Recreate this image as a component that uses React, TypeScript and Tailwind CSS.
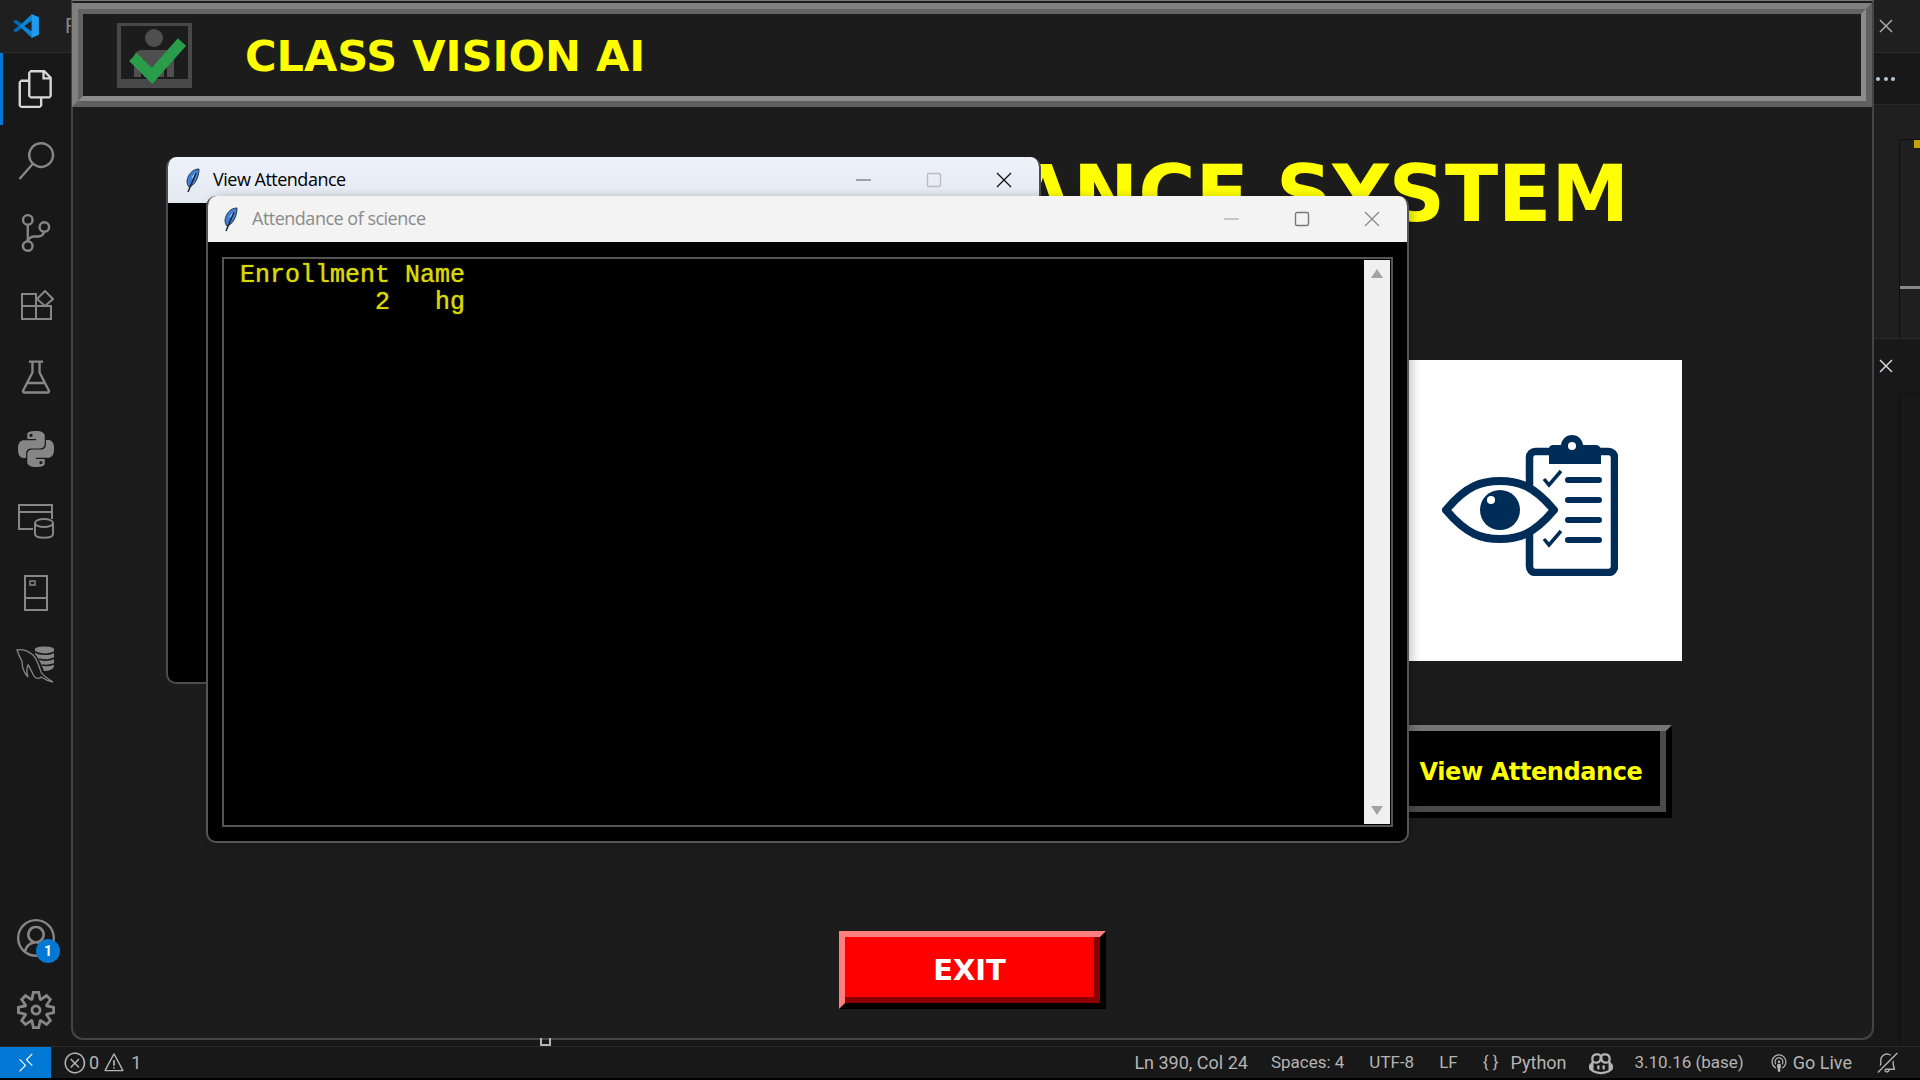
import React from "react";
import {
  VscFiles, VscSearch, VscSourceControl, VscBeaker, VscAccount,
  VscSettingsGear, VscRemote, VscError, VscWarning, VscBroadcast, VscBellSlash, VscCopilot, VscClose,
} from "react-icons/vsc";
import { SiPython } from "react-icons/si";

const VsLogo = () => (
  <svg width="26" height="24" viewBox="0 0 100 100" preserveAspectRatio="none" className="shrink-0">
    <path d="M72 1 L33 41 L12 25 L1 31 L22 50 L1 69 L12 75 L33 59 L72 99 L99 86 V14 Z M72 28 V72 L43 50 Z" fill="#0a84d6" fillRule="evenodd" />
    <path d="M72 1 L99 14 V86 L72 99 V72 V28 Z" fill="#1f9cf0" />
    <path d="M1 69 L12 75 L33 59 L22 50 Z" fill="#0067ab" />
    <path d="M1 31 L12 25 L33 41 L22 50 Z" fill="#0067ab" />
  </svg>
);

const Feather = () => (
  <svg width="16" height="25" viewBox="0 0 16 25">
    <path d="M14 1 C8 1 3 6 2 13 C2 16 3 18 4 19 C9 18 14 10 14 1 Z" fill="#3f7fd6" stroke="#28344a" strokeWidth="1" />
    <path d="M7 10 L11 5" stroke="#a9cdf5" strokeWidth="1.5" />
    <path d="M11 5 L3 24" stroke="#1b2433" strokeWidth="1.5" />
  </svg>
);

const ExtIcon = () => (
  <svg width="33" height="30" viewBox="0 0 33 30" fill="none" stroke="#868686" strokeWidth="2" className="ml-[3px]">
    <path d="M1 4 H15 V29 H1 Z" />
    <path d="M1 16 H30 V29 H15" />
    <path d="M24 1 L32 9 L24 16 L16 9 Z" />
  </svg>
);

const DbIcon = () => (
  <svg width="38" height="36" viewBox="0 0 38 36" fill="none" stroke="#868686" strokeWidth="2">
    <path d="M35 16 V2 H2 V26 H16" />
    <path d="M2 9 H35" />
    <ellipse cx="27" cy="20" rx="9" ry="4" />
    <path d="M18 20 V31 C18 36 36 36 36 31 V20" />
  </svg>
);

const NotebookIcon = () => (
  <svg width="26" height="38" viewBox="0 0 26 38" fill="none" stroke="#868686" strokeWidth="2">
    <rect x="2" y="2" width="22" height="34" />
    <path d="M2 24 H24" />
    <rect x="7" y="7" width="5" height="4" strokeWidth="1.5" />
  </svg>
);

const MysqlIcon = () => (
  <svg width="40" height="38" viewBox="0 0 40 38" fill="none" stroke="#868686">
    <path d="M1 4 C6 3 12 5 17 9 C21 13 23 20 25 26 C27 30 32 33 37 36 C32 35 28 33 25 31 C23 33 20 33 18 30 C16 27 15 23 12 19 C10 23 11 28 12 31 C8 27 6 21 6 15 C4 12 3 9 1 4 Z" strokeWidth="1.3" />
    <path d="M19 3 C19 -0.5 38 -0.5 38 3 V20 C38 24 31 25 28 25 C26 20 24 14 19 8 Z" fill="#868686" stroke="none" />
    <path d="M19 6 C24 9 34 9 38 6 M23 13 C28 15 35 14 38 12 M26 19 C30 20 35 19 38 18" stroke="#181818" strokeWidth="1.6" />
  </svg>
);

const Activity = ({ children, active }: { children: React.ReactNode; active?: boolean }) => (
  <div className={`h-[72px] w-full flex items-center justify-center border-l-[3px] ${active ? "border-[#0078d4] text-[#d7d7d7]" : "border-transparent text-[#868686]"}`}>
    <div className="-ml-[3px] flex items-center justify-center">{children}</div>
  </div>
);

const Logo = () => (
  <svg width="75" height="65" viewBox="0 0 75 65" className="shrink-0">
    <rect x="0" y="0" width="75" height="65" fill="#484848" />
    <rect x="4" y="3" width="67" height="53" fill="#1c1c1c" />
    <circle cx="37" cy="15" r="9" fill="#4f4f4f" />
    <path d="M17 54 V34 C17 29 21 27 26 27 H48 C53 27 57 29 57 34 V54 H50 V36 H47 V54 H27 V36 H24 V54 Z" fill="#4f4f4f" />
    <path d="M16 34 L35 53 L65 19" fill="none" stroke="#2a9d4a" strokeWidth="11" />
  </svg>
);

const EyeClipboard = () => (
  <svg width="176" height="141" viewBox="0 0 176 141" fill="none">
    <rect x="87.5" y="16.5" width="85" height="121" rx="6" stroke="#002d57" strokeWidth="7.5" />
    <path d="M107 14 C107 10 110 10 113 10 H153 C156 10 159 11 159 16 V29 H107 Z" fill="#002d57" />
    <circle cx="130" cy="11" r="11" fill="#002d57" />
    <circle cx="130" cy="11" r="4" fill="#fff" />
    <g stroke="#002d57" strokeWidth="6" strokeLinecap="round">
      <path d="M126 45 H157 M126 65 H157 M126 85 H157 M126 105 H157" />
    </g>
    <path d="M102 44 L107 50 L119 36 M102 104 L107 110 L119 96" stroke="#002d57" strokeWidth="3.5" />
    <path d="M4 75 C25 50 40 46 58 46 C76 46 91 50 112 75 C91 100 76 104 58 104 C40 104 25 100 4 75 Z" fill="#fff" stroke="#002d57" strokeWidth="8" strokeLinejoin="round" />
    <circle cx="58" cy="75" r="20" fill="#002d57" />
    <circle cx="49" cy="65" r="4" fill="#fff" />
  </svg>
);

const WinControls = ({ dim }: { dim?: boolean }) => (
  <div className="flex items-center gap-[48px]">
    <svg width="22" height="14" viewBox="0 0 22 14"><path d="M3 7 H18" stroke={dim ? "#999" : "#555"} strokeWidth="1.2" /></svg>
    <svg width="22" height="16" viewBox="0 0 22 16"><rect x="4.5" y="1.5" width="13" height="13" rx="1.5" fill="none" stroke={dim ? "#777" : "#bcbcbc"} strokeWidth="1.4" /></svg>
    <svg width="22" height="16" viewBox="0 0 22 16"><path d="M4 1 L18 15 M18 1 L4 15" stroke={dim ? "#888" : "#111"} strokeWidth="1.3" /></svg>
  </div>
);

const StatusText = ({ children, className = "", big }: { children: React.ReactNode; className?: string; big?: boolean }) => (
  <span className={`${big ? "text-[18px]" : "text-[17px]"} leading-none whitespace-pre ${className}`}>{children}</span>
);

export default function App() {
  return (
    <div className="relative w-[1920px] h-[1080px] overflow-hidden flex flex-col bg-[#181818] [font-family:Roboto,sans-serif]">
      <div className="flex h-[1046px]">
        {/* Activity bar */}
        <div className="w-[71px] shrink-0 flex flex-col bg-[#181818]">
          <div className="h-[53px] shrink-0 flex items-center border-b border-[#2b2b2b] bg-[#1f1f1f] overflow-hidden pl-[13px]">
            <VsLogo />
            <span className="ml-[26px] text-[20px] text-[#888]">F</span>
          </div>
          <Activity active><VscFiles size={38} /></Activity>
          <Activity><VscSearch size={38} /></Activity>
          <Activity><VscSourceControl size={38} /></Activity>
          <Activity><ExtIcon /></Activity>
          <Activity><VscBeaker size={38} /></Activity>
          <Activity><SiPython size={36} /></Activity>
          <Activity><DbIcon /></Activity>
          <Activity><NotebookIcon /></Activity>
          <Activity><MysqlIcon /></Activity>
          <div className="flex-1" />
          <div className="relative h-[72px] flex items-center justify-center text-[#868686]">
            <VscAccount size={38} />
            <span className="absolute left-[36px] top-[37px] w-[24px] h-[24px] rounded-full bg-[#0078d4] text-white text-[14px] font-bold flex items-center justify-center">1</span>
          </div>
          <div className="h-[72px] flex items-center justify-center text-[#868686]">
            <VscSettingsGear size={38} />
          </div>
        </div>

        {/* Tk main window */}
        <div className="relative w-[1803px] shrink-0 h-[1040px] flex flex-col bg-[#1c1c1c] border-2 border-t-[1px] border-[#444] rounded-b-[12px] border-t-[#777]">
          <div className="mt-[2px] ml-[-1px] h-[104px] shrink-0 border-[6px] border-t-[#808080] border-l-[#808080] border-r-[#606060] border-b-[#606060]">
            <div className="h-full flex items-center border-[5px] border-t-[#646464] border-l-[#646464] border-r-[#8c8c8c] border-b-[#8c8c8c] pl-[34px] bg-[#1c1c1c]">
              <Logo />
              <span className="ml-[53px] pt-[2px] text-[43px] leading-none font-bold text-[#ffff00] [font-family:'DejaVu_Sans',sans-serif]">CLASS VISION AI</span>
            </div>
          </div>

          <div className="self-end mr-[243px] mt-[48px] text-[78px] leading-none font-bold text-[#ffff00] [font-family:'DejaVu_Sans',sans-serif] whitespace-pre">ATTENDANCE SYSTEM</div>

          <div className="self-end mr-[190px] mt-[127px] w-[304px] h-[301px] bg-white flex items-center justify-center pb-[10px]">
            <EyeClipboard />
          </div>

          <div className="self-end mr-[200px] mt-[64px] w-[282px] h-[93px] border-[6px] border-t-[#757575] border-l-[#757575] border-r-black border-b-black">
            <div className="h-full flex items-center justify-center pt-[6px] pl-[6px] bg-black border-r-[6px] border-b-[6px] border-r-[#4a4a4a] border-b-[#4a4a4a] text-[#ffff00] text-[24px] tracking-[-0.4px] font-bold [font-family:'DejaVu_Sans',sans-serif]">View Attendance</div>
          </div>

          <div className="self-center mt-[113px] w-[267px] h-[78px] border-[6px] border-t-[#ff7f7f] border-l-[#ff7f7f] border-r-black border-b-black">
            <div className="h-full flex items-center justify-center pt-[8px] bg-[#ff0000] border-r-[6px] border-b-[6px] border-r-[#8b0000] border-b-[#8b0000] text-white text-[29px] font-bold [font-family:'DejaVu_Sans',sans-serif]">EXIT</div>
          </div>

          <div className="absolute left-[467px] bottom-[-8px] w-[11px] h-[8px] border-2 border-t-0 border-[#b5b5b5]" />
        </div>

        {/* Right editor sliver */}
        <div className="flex-1 flex flex-col bg-[#181818] text-[#aaaaaa]">
          <div className="h-[53px] shrink-0 bg-[#1f1f1f] border-b border-[#2b2b2b] flex items-center pb-[1px]">
            <VscClose size={24} />
          </div>
          <div className="h-[52px] shrink-0 border-b border-[#2b2b2b] flex items-center gap-[3.5px] pl-[2px] pt-[1px]">
            <span className="w-[4px] h-[4px] rounded-full bg-[#b5c8dc]" />
            <span className="w-[4px] h-[4px] rounded-full bg-[#b5c8dc]" />
            <span className="w-[4px] h-[4px] rounded-full bg-[#b5c8dc]" />
          </div>
          <div className="h-[234px] shrink-0 bg-[#1f1f1f] border-b border-[#2b2b2b] pl-[25px] pt-[34px]">
            <div className="h-full border-l border-t border-[#101010]">
              <div className="ml-[14px] w-[6px] h-[8px] bg-[#c8a000]" />
              <div className="mt-[138px] h-[3px] bg-[#888]" />
            </div>
          </div>
          <div className="flex-1 flex flex-col">
            <div className="h-[54px] shrink-0 flex items-center text-[#d0d8e0]"><VscClose size={24} /></div>
            <div className="flex-1 ml-[25px] border-l border-t border-[#101010]" />
          </div>
        </div>
      </div>

      {/* Status bar */}
      <div className="h-[32px] shrink-0 flex items-center bg-[#181818] border-t border-[#2b2b2b] text-[#b4b4b4]">
        <div className="w-[51px] h-full flex items-center justify-center bg-[#0078d4] text-white"><VscRemote size={22} /></div>
        <div className="ml-[12px] flex items-center">
          <VscError size={24} />
          <StatusText big className="ml-[2px]">0</StatusText>
          <VscWarning size={22} className="ml-[4px]" />
          <StatusText big className="ml-[6px]">1</StatusText>
        </div>
        <div className="flex-1" />
        <div className="flex items-center pr-[22px]">
          <StatusText big>Ln 390, Col 24</StatusText>
          <StatusText className="ml-[23px]">Spaces: 4</StatusText>
          <StatusText className="ml-[25px]">UTF-8</StatusText>
          <StatusText className="ml-[25px]">LF</StatusText>
          <StatusText className="ml-[25px]">{"{ }"}</StatusText>
          <StatusText big className="ml-[12px]">Python</StatusText>
          <VscCopilot size={24} className="ml-[22px]" />
          <StatusText className="ml-[22px]">3.10.16 (base)</StatusText>
          <VscBroadcast size={20} className="ml-[25px]" />
          <StatusText big className="ml-[4px]">Go Live</StatusText>
          <VscBellSlash size={22} className="ml-[24px]" />
        </div>
      </div>
      <div className="h-[2px] shrink-0 bg-black" />

      {/* Floating windows */}
      <div className="absolute left-[166px] top-[157px] w-[875px] h-[527px] bg-black border-2 border-t-0 border-[#4c4c4c] rounded-[10px] overflow-hidden">
        <div className="h-[46px] flex items-center bg-gradient-to-b from-[#eef3fb] to-[#e4e9f1] pl-[17px] pr-[24px] text-black">
          <Feather />
          <span className="ml-[12px] pb-[2px] text-[18px] [font-family:'Open_Sans',sans-serif] tracking-[-0.5px]">View Attendance</span>
          <div className="flex-1" />
          <WinControls />
        </div>
      </div>

      <div className="absolute left-[206px] top-[196px] w-[1203px] h-[647px] flex flex-col bg-black border-2 border-t-0 border-[#555] rounded-[10px] overflow-hidden shadow-[4px_0_8px_rgba(0,0,0,0.2)]">
        <div className="h-[46px] shrink-0 flex items-center bg-[#f3f3f3] pl-[15px] pr-[24px] text-[#8a8a8a]">
          <Feather />
          <span className="ml-[13px] pb-[2px] text-[18px] [font-family:'Open_Sans',sans-serif] tracking-[-0.5px]">Attendance of science</span>
          <div className="flex-1" />
          <WinControls dim />
        </div>
        <div className="mx-[14px] mt-[15px] mb-[14px] flex-1 flex border-2 border-[#555]">
          <pre className="flex-1 pl-[16px] pt-[3px] text-[25px] leading-[27px] text-[#d8d800] [text-shadow:0_0_1px_#d8d800] [font-family:'Liberation_Mono',monospace]">{"Enrollment Name\n         2   hg"}</pre>
          <div className="w-[26px] my-[1px] mr-[1px] flex flex-col items-center justify-between py-[9px] bg-[#f0f0f0]">
            <div className="w-0 h-0 border-x-[6px] border-x-transparent border-b-[9px] border-b-[#a3a3a3]" />
            <div className="w-0 h-0 border-x-[6px] border-x-transparent border-t-[9px] border-t-[#a3a3a3]" />
          </div>
        </div>
      </div>
    </div>
  );
}
